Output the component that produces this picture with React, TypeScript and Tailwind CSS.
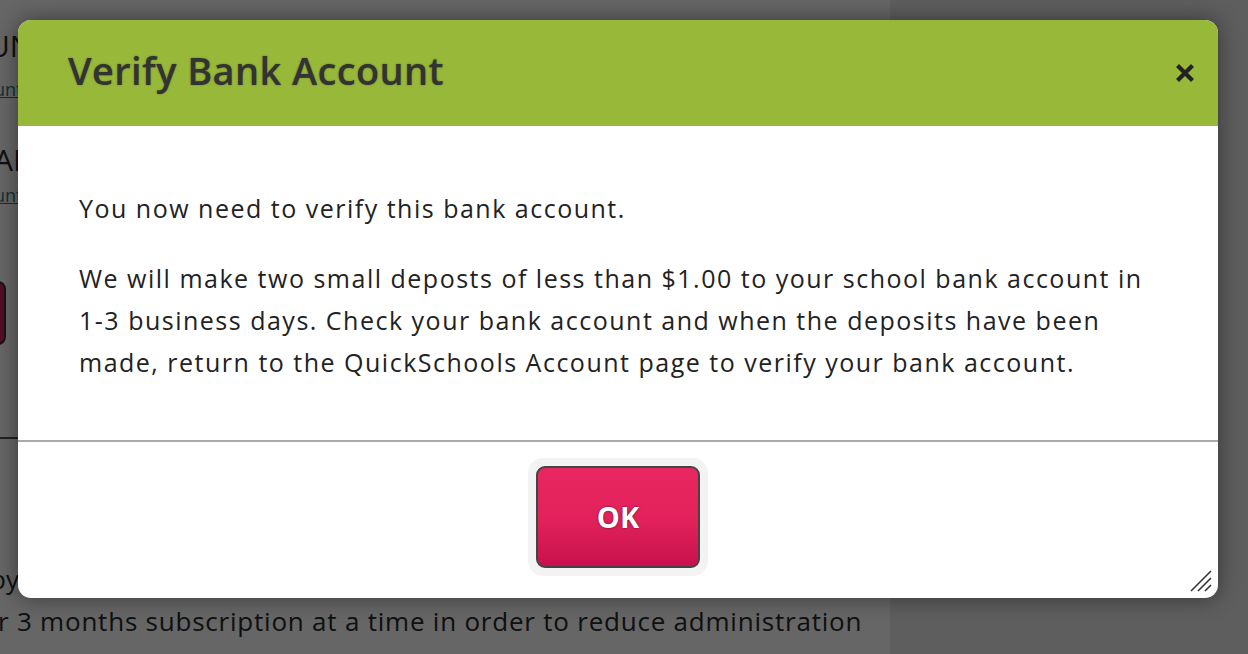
import React from 'react';

const ResizeGrip = () => (
  <svg width="24" height="24" viewBox="0 0 24 24" className="block">
    <line x1="2" y1="22" x2="22" y2="2" stroke="#333" strokeWidth="1.6" />
    <line x1="9" y1="22" x2="22" y2="9" stroke="#333" strokeWidth="1.6" />
    <line x1="16" y1="22" x2="22" y2="16" stroke="#333" strokeWidth="1.6" />
  </svg>
);

const CloseIcon = () => (
  <svg width="18" height="18" viewBox="0 0 18 18" className="block">
    <path d="M3 3 L15 15 M15 3 L3 15" stroke="#222" strokeWidth="4.2" strokeLinecap="square" />
  </svg>
);

const App = () => {
  return (
    <div className="relative w-[1248px] h-[654px] overflow-hidden bg-[#ebebeb] font-['Open_Sans','Lato',sans-serif]">
      {/* page behind the dialog */}
      <div className="flex h-full">
        <div className="w-[890px] h-full bg-white overflow-hidden text-[#2a2a2a]">
          <p className="-ml-[12px] mt-[28px] text-[30px] leading-[36px]">UN</p>
          <a className="block -ml-[6px] mt-[14px] text-[18px] leading-[22px] text-[#1d7f86] underline">unt</a>
          <p className="-ml-[6px] mt-[42px] text-[30px] leading-[36px]">AN</p>
          <a className="block -ml-[6px] mt-[6px] text-[18px] leading-[22px] text-[#1d7f86] underline">unt</a>
          <div className="-ml-[60px] mt-[75px] w-[66px] h-[64px] rounded-[8px] bg-[#d8245a] border-2 border-[#333]" />
          <div className="mt-[92px] h-[2px] bg-[#555]" />
          <p className="-ml-[10px] mt-[124px] text-[26px] leading-[32px]">py</p>
          <p className="-ml-[2px] mt-[10px] text-[26px] leading-[32px] tracking-[0.03em] whitespace-nowrap">
            r 3 months subscription at a time in order to reduce administration
          </p>
        </div>
        <div className="flex-1 h-full bg-[#ebebeb]" />
      </div>

      <div className="absolute inset-0 bg-black/60" />

      {/* dialog */}
      <div className="absolute left-[18px] top-[20px] w-[1200px] h-[578px] rounded-[13px] bg-white overflow-hidden shadow-[0_0_22px_rgba(0,0,0,0.45)] flex flex-col">
        <div className="h-[106px] shrink-0 bg-[#98b83a] flex items-center justify-between pl-[50px] pr-[24px]">
          <h2 className="text-[38px] leading-none font-semibold tracking-[0.01em] text-[#333] [text-shadow:0_0_2px_rgba(0,0,0,0.35)] -mt-[6px]">
            Verify Bank Account
          </h2>
          <CloseIcon />
        </div>

        <div className="h-[314px] shrink-0 pl-[61px] pt-[61px] text-[25px] leading-[42px] tracking-[0.06em] text-[#222]">
          <p>You now need to verify this bank account.</p>
          <p className="mt-[28px]">
            We will make two small deposts of less than $1.00 to your school bank account in
            <br />
            1-3 business days. Check your bank account and when the deposits have been
            <br />
            made, return to the QuickSchools Account page to verify your bank account.
          </p>
        </div>

        <div className="h-[2px] shrink-0 bg-[#aaaaaa]" />

        <div className="relative flex-1 flex justify-center pt-[16px]">
          <div className="h-[118px] p-[8px] rounded-[15px] bg-[#f3f3f3]">
            <button className="w-[164px] h-[102px] rounded-[9px] border-2 border-[#444] bg-gradient-to-b from-[#e8265f] via-[#e3225b] to-[#c9104e] text-white text-[29px] font-bold [text-shadow:0_0_2px_rgba(0,0,0,0.7)]">
              OK
            </button>
          </div>
          <div className="absolute right-[5px] bottom-[5px]">
            <ResizeGrip />
          </div>
        </div>
      </div>
    </div>
  );
};

export default App;
